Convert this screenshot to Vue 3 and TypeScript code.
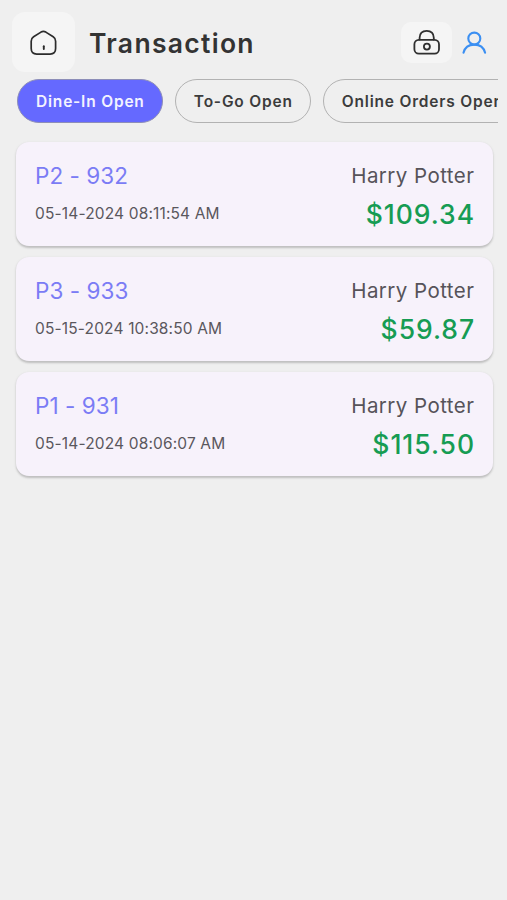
<script setup lang="ts">
import { ref } from 'vue'

interface Order {
  code: string
  date: string
  customer: string
  total: string
}

const tabs: string[] = ['Dine-In Open', 'To-Go Open', 'Online Orders Open']
const activeTab = ref<number>(0)

const orders: Order[] = [
  { code: 'P2 - 932', date: '05-14-2024 08:11:54 AM', customer: 'Harry Potter', total: '$109.34' },
  { code: 'P3 - 933', date: '05-15-2024 10:38:50 AM', customer: 'Harry Potter', total: '$59.87' },
  { code: 'P1 - 931', date: '05-14-2024 08:06:07 AM', customer: 'Harry Potter', total: '$115.50' },
]
</script>

<template>
  <main class="screen">
    <header class="header">
      <button class="tile home" aria-label="Home">
        <svg width="28" height="28" viewBox="0 0 28 28" fill="none" stroke="#2b2b2b" stroke-width="1.7" stroke-linecap="round" stroke-linejoin="round">
          <path d="M3.6 8.8 L11 4.1 Q13.4 2.7 15.8 4.1 L23.2 8.8 Q25.6 10.4 25.6 13.2 V20.6 Q25.6 26.1 20.1 26.1 H6.7 Q1.2 26.1 1.2 20.6 V13.2 Q1.2 10.4 3.6 8.8 Z" />
          <path d="M13.8 18.2 V21" stroke-width="1.9" />
        </svg>
      </button>
      <h1 class="title">Transaction</h1>
      <button class="tile lock" aria-label="Lock">
        <svg width="28" height="28" viewBox="0 0 28 28" fill="none" stroke="#2f2f2f" stroke-width="1.8" stroke-linecap="round">
          <rect x="1.4" y="11.8" width="24.6" height="13.8" rx="4.4" />
          <path d="M6.6 11.6 V9.8 Q6.8 2.9 13.7 2.9 Q20.6 2.9 20.8 9.8 V11.6" />
          <circle cx="13.9" cy="18.6" r="3" />
        </svg>
      </button>
      <button class="user" aria-label="Account">
        <svg width="28" height="28" viewBox="0 0 28 28" fill="none" stroke="#3b8ff2" stroke-width="2.1" stroke-linecap="round">
          <circle cx="14.3" cy="10.6" r="6" />
          <path d="M3.5 24.8 C4.8 19.6 9 16.6 14.3 16.6 S23.8 19.6 25.1 24.8" />
        </svg>
      </button>
    </header>

    <nav class="tabs">
      <button
        v-for="(tab, i) in tabs"
        :key="tab"
        class="tab"
        :class="{ active: i === activeTab }"
        @click="activeTab = i"
      >{{ tab }}</button>
    </nav>

    <section class="list">
      <article v-for="order in orders" :key="order.code" class="card">
        <div class="row">
          <span class="code">{{ order.code }}</span>
          <span class="customer">{{ order.customer }}</span>
        </div>
        <div class="row amounts">
          <span class="date">{{ order.date }}</span>
          <span class="total">{{ order.total }}</span>
        </div>
      </article>
    </section>
  </main>
</template>

<style>
body {
  background: #efefef;
}
</style>

<style scoped>
.screen {
  min-height: 900px;
  box-sizing: border-box;
  padding-top: 12px;
  background: #efefef;
  font-family: Inter, "Noto Sans", sans-serif;
  overflow: hidden;
}
button {
  border: 0;
  padding: 0;
  margin: 0;
  font-family: inherit;
  background: none;
}
.header {
  display: flex;
  align-items: center;
  height: 60px;
  padding: 0 19px 0 12px;
}
.tile,
.user {
  display: flex;
  align-items: center;
  justify-content: center;
  flex: none;
}
.tile {
  background: #f5f5f5;
}
.home {
  width: 63px;
  height: 60px;
  border-radius: 13px;
}
.title {
  flex: 1;
  margin: 2px 0 0 14px;
  font-size: 26.5px;
  line-height: 32px;
  font-weight: 600;
  letter-spacing: 1.3px;
  color: #333;
}
.lock {
  width: 51px;
  height: 41px;
  border-radius: 10px;
}
.user {
  width: 28px;
  margin-left: 8px;
}
.tabs {
  display: flex;
  gap: 12px;
  margin: 7px 9px 0 17px;
  overflow-x: auto;
  scrollbar-width: none;
}
.tab {
  flex: none;
  height: 44px;
  box-sizing: border-box;
  padding: 0 17.2px 0 18px;
  border: 1.5px solid #b2b2b2;
  border-radius: 22px;
  font-size: 15.5px;
  font-weight: 600;
  letter-spacing: 0.8px;
  white-space: nowrap;
  color: #3c3c3c;
}
.tab.active {
  background: #6569ff;
  border-color: #8d8eb8;
  color: #f3f3ff;
}
.list {
  display: flex;
  flex-direction: column;
  gap: 11px;
  padding: 19px 14px 0 16px;
}
.card {
  height: 104px;
  box-sizing: border-box;
  padding: 18px 19px 0;
  border-radius: 13px;
  background: #f7f2fb;
  box-shadow: 0 1.5px 2px rgba(0, 0, 0, 0.18), 0 1px 4px rgba(0, 0, 0, 0.04);
}
.row {
  display: flex;
  justify-content: space-between;
  align-items: center;
  height: 30px;
  white-space: nowrap;
}
.amounts {
  margin-top: 8px;
}
.code {
  font-size: 22.5px;
  letter-spacing: 0.05px;
  color: #7b7cf5;
}
.customer {
  margin-right: -0.4px;
  font-size: 20.5px;
  letter-spacing: 0.45px;
  color: #565359;
}
.date {
  font-size: 15.5px;
  letter-spacing: 0.15px;
  color: #5a575d;
}
.total {
  margin: 2px -1px 0 0;
  font-size: 26.5px;
  font-weight: 550;
  letter-spacing: 0.95px;
  color: #169c53;
}
</style>
